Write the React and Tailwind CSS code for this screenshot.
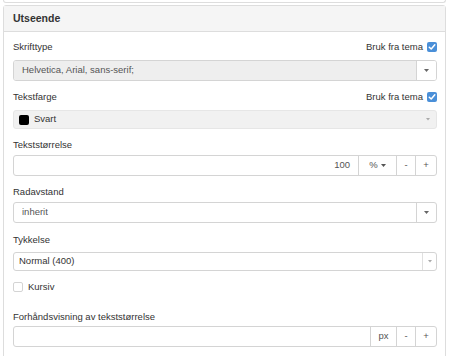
import React from 'react'

const font = { fontFamily: '"Liberation Sans", Arial, sans-serif' }

function Caret({ size = 5, className = '' }) {
  return (
    <svg width={size} height={size * 0.6} viewBox="0 0 6 3.6" className={className}>
      <path d="M0 0 L6 0 L3 3.6 Z" fill="currentColor" />
    </svg>
  )
}

function CheckedBox() {
  return (
    <span className="inline-flex w-[10px] h-[10px] rounded-[2px] bg-[#4a8fd8] items-center justify-center">
      <svg width="8" height="8" viewBox="0 0 8 8">
        <path d="M1.3 4.2 L3.2 6 L6.8 1.8" stroke="white" strokeWidth="1.5" fill="none" strokeLinecap="round" strokeLinejoin="round" />
      </svg>
    </span>
  )
}

function Label({ children, right, className = '' }) {
  return (
    <div className={`flex items-center justify-between h-[14px] leading-[14px] text-[9.5px] text-[#333] ${className}`}>
      <span>{children}</span>
      {right}
    </div>
  )
}

function BrukFraTema() {
  return (
    <span className="flex items-center gap-[4px] text-[9.5px] text-[#333]">
      Bruk fra tema
      <CheckedBox />
    </span>
  )
}

export default function App() {
  return (
    <div className="w-[449px] h-[356px] bg-white overflow-hidden px-[3px]" style={font}>
      {/* end of previous panel */}
      <div className="h-[3px] border border-t-0 border-[#ddd] rounded-b-[3px]" />

      <div className="mt-[2px] border border-[#ddd] rounded-[3px] h-[400px]">
        <div className="h-[26px] bg-[#f5f5f5] border-b border-[#ddd] flex items-center px-[9px] text-[10.5px] font-bold text-[#333]">
          Utseende
        </div>

        <div className="px-[9px] pr-[8px]">
          <Label className="mt-[8px]" right={<BrukFraTema />}>Skrifttype</Label>
          <div className="mt-[6px] flex h-[21px] border border-[#d4d4d4] rounded-[3px] overflow-hidden text-[9.5px]">
            <div className="flex-1 bg-[#eee] flex items-center px-[8px] text-[#555]">Helvetica, Arial, sans-serif;</div>
            <div className="w-[20px] border-l border-[#d4d4d4] bg-white flex items-center justify-center text-[#666]">
              <Caret />
            </div>
          </div>

          <Label className="mt-[9px]" right={<BrukFraTema />}>Tekstfarge</Label>
          <div className="mt-[6px] flex items-center h-[19px] border border-[#e6e6e6] rounded-[3px] bg-[#f1f1f1] pl-[5px] pr-[6px] text-[9.5px] text-[#333]">
            <span className="w-[10px] h-[10px] rounded-[2px] bg-black mr-[5px]" />
            <span className="flex-1">Svart</span>
            <Caret size={4} className="text-[#aaa]" />
          </div>

          <Label className="mt-[9px]">Tekststørrelse</Label>
          <div className="mt-[3px] flex h-[21px] border border-[#d4d4d4] rounded-[3px] text-[9.5px] text-[#555]">
            <div className="flex-1 flex items-center justify-end pr-[8px]">100</div>
            <div className="w-[38px] border-l border-[#d4d4d4] flex items-center justify-center gap-[3px]">
              % <Caret />
            </div>
            <div className="w-[19px] border-l border-[#d4d4d4] flex items-center justify-center">-</div>
            <div className="w-[21px] border-l border-[#d4d4d4] flex items-center justify-center">+</div>
          </div>

          <Label className="mt-[9px]">Radavstand</Label>
          <div className="mt-[3px] flex h-[21px] border border-[#d4d4d4] rounded-[3px] text-[9.5px] text-[#555]">
            <div className="flex-1 flex items-center px-[8px]">inherit</div>
            <div className="w-[20px] border-l border-[#d4d4d4] flex items-center justify-center text-[#666]">
              <Caret />
            </div>
          </div>

          <Label className="mt-[10px]">Tykkelse</Label>
          <div className="mt-[5px] flex h-[19px] border border-[#d4d4d4] rounded-[3px] text-[9.5px] text-[#333]">
            <div className="flex-1 flex items-center px-[5px]">Normal (400)</div>
            <div className="w-[14px] border-l border-[#e0e0e0] flex items-center justify-center text-[#aaa]">
              <Caret size={4} />
            </div>
          </div>

          <div className="mt-[11px] flex items-center h-[10px] text-[9.5px] text-[#333]">
            <span className="w-[10px] h-[10px] border border-[#d4d4d4] rounded-[2px] bg-white mr-[5px]" />
            Kursiv
          </div>

          <Label className="mt-[18px]">Forhåndsvisning av tekststørrelse</Label>
          <div className="mt-[2px] flex h-[21px] border border-[#d4d4d4] rounded-[3px] text-[9.5px] text-[#555]">
            <div className="flex-1" />
            <div className="w-[26px] border-l border-[#d4d4d4] flex items-center justify-center">px</div>
            <div className="w-[19px] border-l border-[#d4d4d4] flex items-center justify-center">-</div>
            <div className="w-[21px] border-l border-[#d4d4d4] flex items-center justify-center">+</div>
          </div>
        </div>
      </div>
    </div>
  )
}
